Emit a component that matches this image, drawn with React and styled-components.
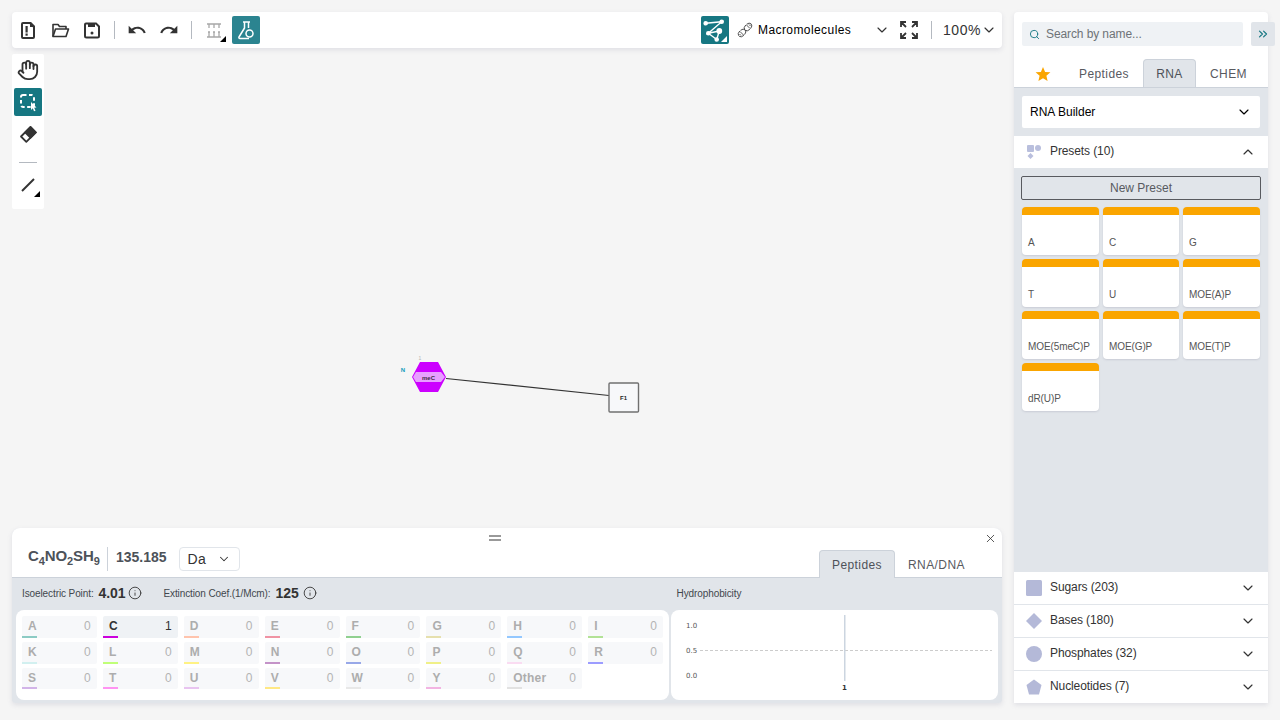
import React from 'react'
import styled, { createGlobalStyle } from 'styled-components'
import {
  ChevronDown,
  ChevronUp,
  ChevronsRight,
  Hand,
  Info,
  Search,
  X,
} from 'lucide-react'

const GlobalStyle = createGlobalStyle`
  html, body {
    margin: 0;
    padding: 0;
    background: #f5f5f5;
    font-family: 'Liberation Sans', Arial, sans-serif;
    overflow: hidden;
  }
  * { box-sizing: border-box; }
`

const aminoRows = [
  [['A', 0, '#8ccbc4'], ['C', 1, '#cc00dd'], ['D', 0, '#ffc4ad'], ['E', 0, '#f093a4'], ['F', 0, '#90d090'], ['G', 0, '#e6e0ae'], ['H', 0, '#94c8ff'], ['I', 0, '#b2e296']],
  [['K', 0, '#d2f0f0'], ['L', 0, '#c0ff78'], ['M', 0, '#fff284'], ['N', 0, '#c493c8'], ['O', 0, '#98a8e8'], ['P', 0, '#f0f088'], ['Q', 0, '#fadcf2'], ['R', 0, '#9c9cff']],
  [['S', 0, '#d2b4e8'], ['T', 0, '#ff94f2'], ['U', 0, '#e8c4f0'], ['V', 0, '#ffe884'], ['W', 0, '#e8e8e8'], ['Y', 0, '#f2b4e2'], ['Other', 0, '#e2e2e2']],
]

const presets = ['A', 'C', 'G', 'T', 'U', 'MOE(A)P', 'MOE(5meC)P', 'MOE(G)P', 'MOE(T)P', 'dR(U)P']

const Page = styled.div`
  display: flex;
  width: 1280px;
  height: 720px;
  padding: 12px 12px 17px;
  gap: 12px;
`
const LeftColumn = styled.div`
  width: 990px;
  display: flex;
  flex-direction: column;
`
const TopBar = styled.div`
  height: 36px;
  flex: none;
  background: #fff;
  border-radius: 4px;
  box-shadow: 0 2px 5px rgba(103, 104, 132, 0.15);
  display: flex;
  align-items: center;
`
const IconButton = styled.button`
  position: relative;
  width: 28px;
  height: 28px;
  margin: ${(p) => p.$margin || '0 2px'};
  padding: 0;
  border: 0;
  border-radius: 2px;
  flex: none;
  display: flex;
  align-items: center;
  justify-content: center;
  color: ${(p) => (p.$active ? '#fff' : '#333')};
  background: ${(p) => p.$active || 'transparent'};
`
const Corner = styled.span`
  position: absolute;
  right: 2px;
  bottom: 2px;
  width: 0;
  height: 0;
  border-style: solid;
  border-width: 0 0 6px 6px;
  border-color: transparent transparent ${(p) => p.$color || '#000'} transparent;
`
const BarDivider = styled.span`
  width: 1px;
  height: 18px;
  flex: none;
  margin: ${(p) => p.$margin || '0 6px'};
  background: #b4b9c0;
`
const Spacer = styled.div`
  flex: 1;
`
const ModeSelect = styled.div`
  width: 153px;
  display: flex;
  align-items: center;
  margin-left: 8px;
  font-size: 12px;
  letter-spacing: 0.42px;
  color: #000;
  span { margin-left: 5px; flex: 1; }
  svg { flex: none; }
`
const Zoom = styled.div`
  display: flex;
  align-items: center;
  font-size: 14px;
  letter-spacing: 0.55px;
  color: #333;
  margin-right: 5px;
`
const Canvas = styled.div`
  position: relative;
  flex: 1;
  padding-top: 6px;
`
const CanvasDrawing = styled.svg`
  position: absolute;
  left: 0;
  top: 0;
`
const SideBar = styled.div`
  position: relative;
  width: 32px;
  padding: 2px 0 10px;
  background: #fff;
  border-radius: 2px;
  display: flex;
  flex-direction: column;
  gap: 4px;
  align-items: center;
`
const SideDivider = styled.span`
  width: 18px;
  height: 1px;
  background: #b4b9c0;
  margin: 10px 0 4px;
`
const BottomPanel = styled.div`
  position: relative;
  height: 175px;
  flex: none;
  background: #e1e5ea;
  border-radius: 8px 8px 4px 4px;
  box-shadow: 0 2px 5px rgba(103, 104, 132, 0.15);
  overflow: hidden;
`
const PanelHead = styled.div`
  height: 50px;
  background: #fff;
  border-bottom: 1px solid #ccd2da;
  display: flex;
  align-items: flex-end;
  padding: 0 24px 0 16px;
`
const Formula = styled.div`
  height: 30px;
  padding-top: 4px;
  width: 79px;
  margin-bottom: 4px;
  font-size: 15px;
  font-weight: 700;
  letter-spacing: -0.1px;
  color: #4d5259;
  white-space: nowrap;
  sub { font-size: 11px; line-height: 0; vertical-align: -4px; }
`
const Mass = styled.div`
  height: 24px;
  margin-bottom: 6px;
  padding: 2px 12px 0 8px;
  border-left: 1px solid #ccd2da;
  font-size: 14px;
  font-weight: 700;
  color: #4d5259;
`
const UnitSelect = styled.div`
  width: 61px;
  height: 24px;
  margin-bottom: 6px;
  padding: 0 8px;
  border: 1px solid #e1e5ea;
  border-radius: 4px;
  display: flex;
  align-items: center;
  justify-content: space-between;
  font-size: 14px;
  letter-spacing: 0.3px;
  color: #333;
`
const HeadTabs = styled.div`
  display: flex;
  margin-left: auto;
  margin-bottom: -1px;
`
const Tab = styled.div`
  height: 28px;
  width: ${(p) => p.$width};
  display: flex;
  align-items: center;
  justify-content: center;
  font-size: 12px;
  letter-spacing: 0.42px;
  color: ${(p) => (p.$active ? '#4d5259' : '#585a5f')};
  background: ${(p) => (p.$active ? '#e1e5ea' : 'transparent')};
  border: 1px solid ${(p) => (p.$active ? '#ccd2da' : 'transparent')};
  border-bottom: 0;
  border-radius: 4px 4px 0 0;
`
const Grip = styled.div`
  position: absolute;
  left: 477px;
  top: 7px;
  width: 12px;
  height: 6px;
  border-top: 2px solid #999;
  border-bottom: 2px solid #999;
`
const CloseIcon = styled(X)`
  position: absolute;
  right: 5px;
  top: 3.500px;
`
const StatsRow = styled.div`
  height: 32px;
  padding: 0 0 2px 10px;
  display: flex;
  align-items: center;
  color: #333;
  font-size: 10px;
`
const StatLabel = styled.span`
  margin-right: 5px;
  letter-spacing: -0.1px;
  color: #42474d;
`
const StatValue = styled.strong`
  font-size: 14px;
  letter-spacing: -0.1px;
  color: #333;
  margin-right: ${(p) => p.$after}px;
`
const InfoIcon = styled(Info)`
  margin-right: ${(p) => p.$after}px;
`
const Panels = styled.div`
  display: grid;
  grid-template-columns: 653px 327px;
  gap: 2px;
  padding-left: 4px;
`
const AminoCard = styled.div`
  height: 90px;
  padding: 6px;
  background: #fff;
  border-radius: 8px;
  display: grid;
  grid-template-columns: repeat(8, 1fr);
  grid-template-rows: 22px 22px 21px;
  gap: 4px 6px;
  align-content: start;
`
const Cell = styled.div`
  position: relative;
  display: flex;
  align-items: center;
  justify-content: space-between;
  padding: 0 6px 2px;
  border-radius: 2px;
  font-size: 12px;
  letter-spacing: 0.2px;
  background: ${(p) => (p.$on ? '#eff2f5' : '#f7f8fa')};
  color: ${(p) => (p.$on ? '#333' : '#b4b4b4')};
  b { font-size: 12px; color: ${(p) => (p.$on ? '#333' : '#adadad')}; }
  &::after {
    content: '';
    position: absolute;
    left: 0;
    bottom: 0;
    width: 15px;
    height: 2px;
    background: ${(p) => p.$color};
  }
`
const ChartCard = styled.div`
  height: 90px;
  background: #fff;
  border-radius: 8px;
`
const RightPanel = styled.div`
  position: relative;
  width: 254px;
  background: #fff;
  border-radius: 4px 4px 0 0;
  box-shadow: 0 2px 5px rgba(103, 104, 132, 0.15);
  display: flex;
  flex-direction: column;
`
const SearchRow = styled.div`
  display: flex;
  padding: 10px 0 0 8px;
  gap: 8px;
  height: 48px;
  flex: none;
`
const SearchBox = styled.div`
  width: 221px;
  height: 24px;
  flex: none;
  padding: 0 7px;
  border-radius: 2px;
  background: #eff2f5;
  display: flex;
  align-items: center;
  gap: 6px;
  font-size: 12px;
  letter-spacing: -0.1px;
  color: #6e7377;
`
const Collapse = styled.div`
  width: 24px;
  height: 24px;
  flex: none;
  border-radius: 2px;
  background: #e1e5ea;
  display: flex;
  align-items: center;
  padding-left: 5px;
  color: #167782;
`
const LibTabs = styled.div`
  height: 28px;
  flex: none;
  display: flex;
  border-bottom: 1px solid #ccd2da;
  padding-left: 6px;
  align-items: flex-end;
`
const LibBody = styled.div`
  flex: 1;
  background: #e1e5ea;
  display: flex;
  flex-direction: column;
`
const SelectWrap = styled.div`
  padding: 8px 8px;
  flex: none;
`
const BuilderSelect = styled.div`
  height: 32px;
  padding: 0 8px;
  border-radius: 2px;
  background: #fff;
  display: flex;
  align-items: center;
  justify-content: space-between;
  font-size: 12px;
  color: #000;
`
const AccordionHead = styled.div`
  height: ${(p) => p.$height || '32px'};
  flex: none;
  background: #fff;
  display: flex;
  align-items: center;
  padding: 0 12px;
  font-size: 12px;
  letter-spacing: -0.1px;
  color: #333;
  span { flex: 1; margin-left: 8px; margin-top: -2px; }
  & + & { border-top: 1px solid #e1e5ea; }
`
const PresetsBody = styled.div`
  flex: 1;
  padding: 8px 7px;
`
const NewPreset = styled.div`
  height: 24px;
  border: 1px solid #585a5f;
  border-radius: 2px;
  background: #e1e5ea;
  display: flex;
  align-items: center;
  justify-content: center;
  font-size: 12px;
  color: #585a5f;
  margin-bottom: 7px;
`
const PresetGrid = styled.div`
  display: grid;
  grid-template-columns: 77px 76px 77px;
  gap: 4px;
  padding-left: 1px;
`
const PresetCard = styled.div`
  height: 48px;
  background: #fff;
  border-top: 8px solid #faa500;
  border-radius: 4px;
  box-shadow: 0 1px 2px rgba(103, 104, 132, 0.2);
  padding: 22px 6px 0;
  font-size: 10px;
  line-height: 12px;
  letter-spacing: -0.1px;
  color: #555;
`

function NewFileIcon() {
  return (
    <svg width='24' height='24' viewBox='0 0 24 24'>
      <path d='M7 5h7l4 4v10a1 1 0 0 1-1 1H7a1 1 0 0 1-1-1V6a1 1 0 0 1 1-1z' fill='none' stroke='#333' strokeWidth='2' strokeLinejoin='round' />
      <path d='M14 4h1l4 4v1h-5z' fill='#333' />
      <rect x='9.500' y='8' width='2.200' height='6.500' fill='#333' />
      <rect x='9.500' y='15.500' width='2.200' height='2.200' fill='#333' />
    </svg>
  )
}

function OpenIcon() {
  return (
    <svg width='24' height='24' viewBox='0 0 24 24' fill='none' stroke='#333' strokeWidth='1.600' strokeLinejoin='round'>
      <path d='M5 18.500V6.500h5l1.500 2H18v2.500' />
      <path d='M5 18.500h13l2.500-7.500h-13z' />
    </svg>
  )
}

function SaveIcon() {
  return (
    <svg width='24' height='24' viewBox='0 0 24 24'>
      <path d='M6 5.500h10l3 3V18a1.500 1.500 0 0 1-1.500 1.500h-11A1.500 1.500 0 0 1 5 18V6.500a1 1 0 0 1 1-1z' fill='none' stroke='#333' strokeWidth='2' />
      <rect x='8' y='5' width='7' height='4' fill='#333' />
      <circle cx='12' cy='15' r='1.500' fill='#333' />
    </svg>
  )
}

function UndoIcon() {
  return (
    <svg width='20' height='20' viewBox='0 0 24 24' fill='#333'>
      <path d='M12.500 8c-2.650 0-5.050.99-6.900 2.600L2 7v9h9l-3.620-3.620c1.390-1.160 3.160-1.880 5.120-1.880 3.540 0 6.550 2.310 7.600 5.500l2.370-.78C21.080 11.030 17.150 8 12.500 8z' />
    </svg>
  )
}

function RedoIcon() {
  return (
    <svg width='20' height='20' viewBox='0 0 24 24' fill='#333'>
      <path d='M18.400 10.600C16.550 8.990 14.150 8 11.500 8c-4.650 0-8.580 3.030-9.960 7.220L3.900 16c1.050-3.190 4.050-5.500 7.600-5.500 1.950 0 3.730.72 5.120 1.880L13 16h9V7l-3.600 3.600z' />
    </svg>
  )
}

function RulerIcon() {
  return (
    <svg width='24' height='24' viewBox='0 0 24 24' stroke='#a8a8a8' strokeWidth='1.300' fill='none'>
      <path d='M5 6h14M5 19h14' strokeWidth='1.600' />
      <path d='M7 6v4M12 6v4M17 6v4M7 14v5M12 14v5M17 14v5' />
      <path d='M6 14h2M11 14h2M16 14h2' />
    </svg>
  )
}

function FlaskIcon() {
  return (
    <svg width='24' height='24' viewBox='0 0 24 24' fill='none' stroke='#fff' strokeWidth='1.500' strokeLinejoin='round'>
      <path d='M9 4h7M10.500 4v6L5 19a1 1 0 0 0 1 1.500h9' />
      <path d='M14.500 4v6' />
      <circle cx='15.500' cy='15.500' r='3.500' />
    </svg>
  )
}

function SelectIcon() {
  return (
    <svg width='24' height='24' viewBox='0 0 24 24' fill='none'>
      <rect x='5' y='5' width='13' height='12' rx='2' stroke='#fff' strokeWidth='2' strokeDasharray='3.500 2.500' />
      <path d='M15 12l5.500 5.500-2.300.2 1.300 3-1.500.6-1.200-3-1.800 1.600z' fill='#fff' />
    </svg>
  )
}

function EraserIcon() {
  return (
    <svg width='24' height='24' viewBox='0 0 24 24'>
      <path d='M14.500 5L19.800 10.300 10.300 19.800 5 14.500z' fill='none' stroke='#333' strokeWidth='1.800' strokeLinejoin='round' />
      <path d='M14.500 4L21 10.500 14.500 17 8 10.500z' fill='#333' />
    </svg>
  )
}

function LineIcon() {
  return (
    <svg width='24' height='24' viewBox='0 0 24 24'>
      <path d='M6 18L18 6' stroke='#333' strokeWidth='2' />
    </svg>
  )
}

function LayoutIcon() {
  return (
    <svg width='24' height='24' viewBox='0 0 24 24' fill='#fff' stroke='#fff' strokeWidth='1.400'>
      <path d='M2.700 5.300l16-1.600L5.300 15.300 16.300 13l-2.600 8.500M5.300 15.300l8.400 6.200' fill='none' />
      <circle cx='2.700' cy='5.300' r='1.600' />
      <circle cx='18.700' cy='3.700' r='1.600' />
      <circle cx='5.300' cy='15.300' r='1.600' />
      <circle cx='16.300' cy='13' r='2.200' />
      <circle cx='13.700' cy='21.500' r='1.600' />
    </svg>
  )
}

function DnaIcon() {
  return (
    <svg width='16' height='16' viewBox='0 0 16 16' fill='none' stroke='#444' strokeWidth='0.900'>
      <ellipse cx='5' cy='11' rx='4.400' ry='3' transform='rotate(-45 5 11)' strokeDasharray='5 1' />
      <ellipse cx='11' cy='5' rx='4.400' ry='3' transform='rotate(-45 11 5)' strokeDasharray='5 1' />
      <path d='M3 9.500l3.500 3.500M2.500 12l1.500 1.500M9.500 3l3.500 3.500M12 2.500l1.500 1.500' />
    </svg>
  )
}

function FullscreenIcon() {
  return (
    <svg width='20' height='20' viewBox='0 0 20 20' fill='none' stroke='#333' strokeWidth='1.800'>
      <path d='M2 7V2h5M2 2l5 5M13 2h5v5M18 2l-5 5M2 13v5h5M2 18l5-5M18 13v5h-5M18 18l-5-5' />
    </svg>
  )
}

function StarIcon() {
  return (
    <svg width='16' height='16' viewBox='0 0 16 16'>
      <path d='M8 1l2.100 4.900 5.300.4-4 3.500 1.200 5.200L8 12.200 3.400 15l1.200-5.200-4-3.500 5.300-.4z' fill='#faa500' />
    </svg>
  )
}

function PresetsIcon() {
  return (
    <svg width='16' height='16' viewBox='0 0 16 16' fill='#b9bfdd'>
      <rect x='1' y='1' width='7' height='7' rx='1' />
      <circle cx='12' cy='4' r='3' />
      <path d='M4.500 9l3 3-3 3-3-3z' />
    </svg>
  )
}

function ShapeIcon({ kind }) {
  return (
    <svg width='16' height='16' viewBox='0 0 16 16' fill='#b4b9d8'>
      {kind === 'square' && <rect x='0' y='0' width='16' height='16' rx='1.500' />}
      {kind === 'diamond' && <path d='M8 0l8 8-8 8-8-8z' />}
      {kind === 'circle' && <circle cx='8' cy='8' r='8' />}
      {kind === 'pentagon' && <path d='M8 0.500l7.500 5.500-2.500 9.500H3L0.500 6z' />}
    </svg>
  )
}

function CanvasContent() {
  // coordinates here are page coordinates, the viewBox starts at the canvas corner
  return (
    <CanvasDrawing width='990' height='480' viewBox='12 48 990 480' fontFamily="'Liberation Sans', Arial, sans-serif">
      <line x1='446' y1='378.500' x2='609' y2='395.500' stroke='#333' strokeWidth='1.200' />
      <polygon points='412,377 420,362 438,362 446,377 438,392 420,392' fill='#cc00ff' />
      <polygon points='416,372 441,372 445,377 441,382 416,382 413,377' fill='#e7a0ff' />
      <text x='428.500' y='380' fontSize='6' fontWeight='700' textAnchor='middle' fill='#3d2a45'>meC</text>
      <text x='403' y='372' fontSize='6' fontWeight='700' textAnchor='middle' fill='#129cbc'>N</text>
      <text x='420' y='360' fontSize='5' textAnchor='middle' fill='#b4b4b4'>1</text>
      <rect x='609' y='383' width='29.500' height='29' rx='1' fill='#f7f8fa' stroke='#707070' strokeWidth='1.400' />
      <text x='623.500' y='400' fontSize='6' fontWeight='700' textAnchor='middle' fill='#222'>F1</text>
    </CanvasDrawing>
  )
}

function HydroChart() {
  return (
    <svg width='327' height='90' viewBox='0 0 327 90' fontFamily="'DejaVu Sans', sans-serif">
      <line x1='29' y1='40.500' x2='321' y2='40.500' stroke='#ccc' strokeWidth='1' strokeDasharray='3 2' />
      <rect x='173' y='5' width='1.500' height='66' fill='#ccd5e0' />
      <text x='15' y='18' fontSize='7' fill='#555'>1.0</text>
      <text x='15' y='43' fontSize='7' fill='#555'>0.5</text>
      <text x='15' y='68' fontSize='7' fill='#555'>0.0</text>
      <text x='173.500' y='80' fontSize='7' fontWeight='700' textAnchor='middle' fill='#333'>1</text>
    </svg>
  )
}

function App() {
  return (
    <>
      <GlobalStyle />
      <Page>
        <LeftColumn>
          <TopBar>
            <IconButton><NewFileIcon /></IconButton>
            <IconButton><OpenIcon /></IconButton>
            <IconButton><SaveIcon /></IconButton>
            <BarDivider $margin='0 8px 0 6px' />
            <IconButton $margin='0 2px 0 0'><UndoIcon /></IconButton>
            <IconButton><RedoIcon /></IconButton>
            <BarDivider $margin='0 6px 0 6px' />
            <IconButton $margin='0 2px'><RulerIcon /><Corner /></IconButton>
            <IconButton $margin='0 0 0 2px' $active='#2b8490'><FlaskIcon /></IconButton>
            <Spacer />
            <IconButton $active='#167782' $margin='0'><LayoutIcon /><Corner $color='#fff' /></IconButton>
            <ModeSelect>
              <DnaIcon />
              <span>Macromolecules</span>
              <ChevronDown size={16} color='#333' strokeWidth={1.750} />
            </ModeSelect>
            <IconButton $margin='0 8px 0 5px'><FullscreenIcon /></IconButton>
            <BarDivider $margin='0 11px 0 0' />
            <Zoom>100%<ChevronDown size={16} strokeWidth={1.750} /></Zoom>
          </TopBar>
          <Canvas>
            <CanvasContent />
            <SideBar>
              <IconButton><Hand size={22} strokeWidth={2} /></IconButton>
              <IconButton $active='#167782'><SelectIcon /></IconButton>
              <IconButton><EraserIcon /></IconButton>
              <SideDivider />
              <IconButton><LineIcon /><Corner /></IconButton>
            </SideBar>
          </Canvas>
          <BottomPanel>
            <PanelHead>
              <Formula>C<sub>4</sub>NO<sub>2</sub>SH<sub>9</sub></Formula>
              <Mass>135.185</Mass>
              <UnitSelect>Da<ChevronDown size={14} strokeWidth={1.750} /></UnitSelect>
              <HeadTabs>
                <Tab $active $width='76px'>Peptides</Tab>
                <Tab $width='83px'>RNA/DNA</Tab>
              </HeadTabs>
            </PanelHead>
            <Grip />
            <CloseIcon size={13} color='#333' strokeWidth={1.500} />
            <StatsRow>
              <StatLabel>Isoelectric Point:</StatLabel>
              <StatValue $after={3}>4.01</StatValue>
              <InfoIcon size={14} strokeWidth={1.500} $after={21} />
              <StatLabel>Extinction Coef.(1/Mcm):</StatLabel>
              <StatValue $after={4}>125</StatValue>
              <InfoIcon size={14} strokeWidth={1.500} $after={360} />
              <StatLabel>Hydrophobicity</StatLabel>
            </StatsRow>
            <Panels>
              <AminoCard>
                {aminoRows.flat().map(([letter, count, color]) => (
                  <Cell key={letter} $color={color} $on={count > 0}>
                    <b>{letter}</b>
                    <span>{count}</span>
                  </Cell>
                ))}
              </AminoCard>
              <ChartCard><HydroChart /></ChartCard>
            </Panels>
          </BottomPanel>
        </LeftColumn>
        <RightPanel>
          <SearchRow>
            <SearchBox><Search size={11} color='#167782' />Search by name...</SearchBox>
            <Collapse><ChevronsRight size={14} /></Collapse>
          </SearchRow>
          <LibTabs>
            <Tab $width='45px'><StarIcon /></Tab>
            <Tab $width='78px'>Peptides</Tab>
            <Tab $active $width='53px'>RNA</Tab>
            <Tab $width='65px'>CHEM</Tab>
          </LibTabs>
          <LibBody>
            <SelectWrap>
              <BuilderSelect>RNA Builder<ChevronDown size={16} strokeWidth={1.750} /></BuilderSelect>
            </SelectWrap>
            <AccordionHead>
              <PresetsIcon />
              <span>Presets (10)</span>
              <ChevronUp size={16} strokeWidth={1.750} />
            </AccordionHead>
            <PresetsBody>
              <NewPreset>New Preset</NewPreset>
              <PresetGrid>
                {presets.map((name) => (
                  <PresetCard key={name}>{name}</PresetCard>
                ))}
              </PresetGrid>
            </PresetsBody>
            <AccordionHead><ShapeIcon kind='square' /><span>Sugars (203)</span><ChevronDown size={16} strokeWidth={1.750} /></AccordionHead>
            <AccordionHead $height='33px'><ShapeIcon kind='diamond' /><span>Bases (180)</span><ChevronDown size={16} strokeWidth={1.750} /></AccordionHead>
            <AccordionHead $height='33px'><ShapeIcon kind='circle' /><span>Phosphates (32)</span><ChevronDown size={16} strokeWidth={1.750} /></AccordionHead>
            <AccordionHead $height='33px'><ShapeIcon kind='pentagon' /><span>Nucleotides (7)</span><ChevronDown size={16} strokeWidth={1.750} /></AccordionHead>
          </LibBody>
        </RightPanel>
      </Page>
    </>
  )
}

export default App
